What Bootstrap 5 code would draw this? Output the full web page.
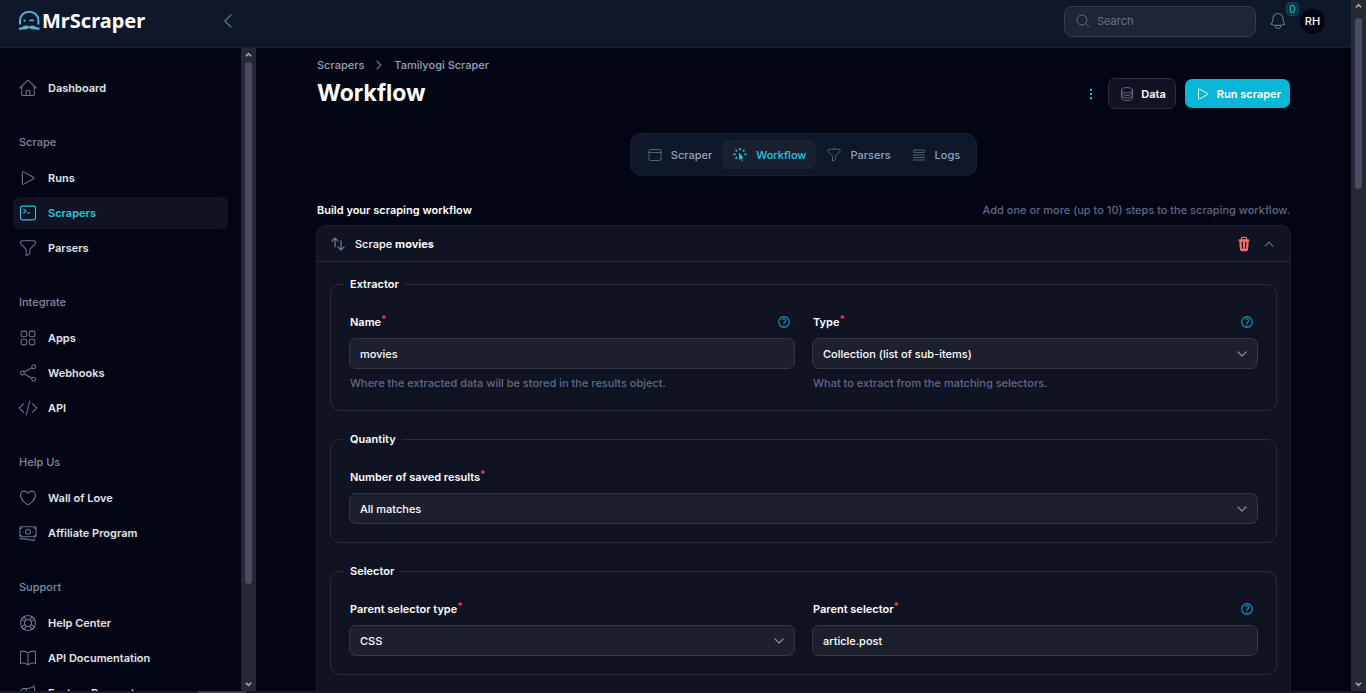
<!DOCTYPE html>
<html lang="en">
<head>
<meta charset="utf-8">
<meta name="viewport" content="width=device-width, initial-scale=1">
<title>Workflow - MrScraper</title>
<link href="https://cdn.jsdelivr.net/npm/bootstrap@5.3.0/dist/css/bootstrap.min.css" rel="stylesheet">
<style>
  :root { --page:#020513; --panel:#0f172a; --step:#101322; --field:#1c1f2c; --line:#272a37; --muted:#94a3b8; --dim:#5b6b84; --cyan:#22c9e0; }
  body { background:var(--page); color:#fff; font:500 11px/18px Inter, "Liberation Sans", sans-serif; }
  a { text-decoration:none; color:inherit; }
  .min-0 { min-width:0; min-height:0; }
  .ico { width:20px; height:20px; fill:none; stroke:currentColor; stroke-width:1.3; stroke-linecap:round; stroke-linejoin:round; flex:none; }
  .ico-sm { width:16px; height:16px; }
  .ico-xs { width:12px; height:12px; stroke-width:2.4; }
  .solid { fill:currentColor; stroke:none; }
  .bold { stroke-width:2; }
  .slate { color:#64748b; }

  .topbar { height:48px; background:var(--panel); border-bottom:1px solid #172133; padding:0 26px 5px 18px; }
  .brand { font:700 20px/26px "Noto Sans", "Open Sans", sans-serif; width:200px; gap:2px; }
  .brand svg { width:22px; height:22px; }
  .search { width:192px; height:31px; background:#1e2536; border:1px solid #353c4b; border-radius:8px; padding:0 10px; gap:6px; }
  .search input { background:none; border:0; outline:0; color:#fff; width:100%; font-size:11px; padding:0; }
  .search input::placeholder { color:#64748b; opacity:1; }
  .alerts { margin:0 12px; }
  .avatar-dot { width:25px; height:25px; background:var(--page); font-size:11px; font-weight:500; }
  .count { top:-9px; left:18px; min-width:13px; height:14px; line-height:12px; font-size:10px; color:var(--cyan); background:#0b3444; border:1px solid #10485a; border-radius:4px; text-align:center; }

  .side { width:241px; padding:24px 13px 0; }
  .side ul { gap:3px; }
  .side h2 { font-size:11px; font-weight:500; line-height:18px; color:#7e8ca2; margin:29px 0 11px 6px; }
  .side a { height:32px; gap:10px; padding:0 5px; border-radius:6px; color:#e2e5ea; font-weight:600; }
  .side a.on { background:#101322; color:var(--cyan); }

  .track { width:15px; background:#262933; flex:none; padding:3px 4px; color:#a5a5a8; }
  .track svg { width:7px; height:7px; fill:none; stroke:currentColor; stroke-width:2; flex:none; }
  .thumb { width:7px; border-radius:4px; background:#484b62; }
  .status { height:2px; background:#1b191c; flex:none; padding-left:198px; }
  .status div { width:48px; height:2px; background:#3c3a3d; }

  main { padding:8px 61px 0; }
  .crumbs { color:var(--muted); gap:9px; margin-bottom:4px; }
  h1 { font-size:23px; font-weight:700; line-height:31px; margin:0; }
  .actions { gap:9px; }
  .tool { font-size:11px; line-height:18px; font-weight:600; color:#fff; border-radius:7px; gap:6px; padding:0 9px 0 10px; height:29px; border:0; }
  .tool.ghost { background:#101322; border:1px solid #2b2e3a; height:31px; }
  .tool.go { background:#08b6d8; }
  .dots { color:var(--cyan); background:none; border:0; padding:0; }
  .tabs { margin:24px 0 25px; }
  .tabs > div { background:var(--panel); border:1px solid #161e2f; border-radius:11px; padding:6px; }
  .tabs a { height:29px; padding:0 10px; gap:8px; border-radius:7px; color:var(--muted); }
  .tabs a svg { color:#5d6c84; }
  .tabs a.on, .tabs a.on svg { color:var(--cyan); }
  .tabs a.on { background:#1b2030; }
  .intro { margin-bottom:6px; }
  .intro h2 { font-size:11px; font-weight:600; line-height:18px; margin:0; }
  .note { color:var(--dim); }

  .step { background:var(--step); border:1px solid #1b1e2b; border-radius:10px; margin:0 -1px; }
  .step-head { height:36px; border-bottom:1px solid var(--line); padding:0 15px 0 13px; gap:9px; }
  .step-head button { background:none; border:0; padding:0; line-height:0; }
  .step-tools { gap:11px; }
  .trash { color:#f87171; }
  .step-body { padding:13px 13px 48px; gap:19px; }
  fieldset { border:1px solid var(--line); border-radius:10px; padding:0 13px 18px; }
  legend { float:none; width:auto; font-size:11px; font-weight:600; line-height:18px; padding:0 6px; margin:0 0 20px; }
  .pair { display:grid; grid-template-columns:1fr 1fr; gap:17px; padding:0 5px; }
  .pair .wide { grid-column:1 / -1; }
  .pair label { font-weight:600; }
  .pair label sup { color:#e5484d; font-size:10px; top:-3px; }
  .label-row { height:18px; margin-bottom:7px; padding:0 4px 0 1px; }
  .box, .box:focus { height:31px; font-size:11px; line-height:18px; font-weight:500; color:#fff; background-color:var(--field); border:1px solid #353844; border-radius:7px; padding:0 10px; box-shadow:none; }
  select.box { background-image:url("data:image/svg+xml,%3Csvg xmlns='http://www.w3.org/2000/svg' viewBox='0 0 12 12' fill='none' stroke='%23848894' stroke-width='1.3' stroke-linecap='round' stroke-linejoin='round'%3E%3Cpath d='M2 4l4 4 4-4'/%3E%3C/svg%3E"); background-size:12px 12px; background-position:right 9px center; }
  .hint { margin-top:5px; padding-left:1px; }
  .help { color:#128fa8; stroke-width:2.2; width:14px; height:14px; }
</style>
</head>
<body class="vh-100 overflow-hidden d-flex flex-column">
<svg class="d-none" xmlns="http://www.w3.org/2000/svg">
  <symbol id="home" viewBox="0 0 24 24"><path d="m2.25 12 8.954-8.955c.44-.439 1.152-.439 1.591 0L21.75 12M4.5 9.75v10.125c0 .621.504 1.125 1.125 1.125H9.75v-4.875c0-.621.504-1.125 1.125-1.125h2.25c.621 0 1.125.504 1.125 1.125V21h4.125c.621 0 1.125-.504 1.125-1.125V9.75M8.25 21h8.25"/></symbol>
  <symbol id="play" viewBox="0 0 24 24"><path d="M5.25 5.653c0-.856.917-1.398 1.667-.986l11.54 6.347a1.125 1.125 0 0 1 0 1.972l-11.54 6.347a1.125 1.125 0 0 1-1.667-.986V5.653Z"/></symbol>
  <symbol id="term" viewBox="0 0 24 24"><path d="m6.75 7.5 3 2.25-3 2.25m4.5 0h3m-9 8.25h13.5A2.25 2.25 0 0 0 21 18V6a2.25 2.25 0 0 0-2.25-2.25H5.25A2.25 2.25 0 0 0 3 6v12a2.25 2.25 0 0 0 2.25 2.25Z"/></symbol>
  <symbol id="funnel" viewBox="0 0 24 24"><path d="M12 3c2.755 0 5.455.232 8.083.678.533.09.917.556.917 1.096v1.044a2.25 2.25 0 0 1-.659 1.591l-5.432 5.432a2.25 2.25 0 0 0-.659 1.591v2.927a2.25 2.25 0 0 1-1.244 2.013L9.75 21v-6.568a2.25 2.25 0 0 0-.659-1.591L3.659 7.409A2.25 2.25 0 0 1 3 5.818V4.774c0-.54.384-1.006.917-1.096A48.32 48.32 0 0 1 12 3Z"/></symbol>
  <symbol id="grid" viewBox="0 0 24 24"><path d="M3.75 6A2.25 2.25 0 0 1 6 3.75h2.25A2.25 2.25 0 0 1 10.5 6v2.25a2.25 2.25 0 0 1-2.25 2.25H6a2.25 2.25 0 0 1-2.25-2.25V6ZM3.75 15.75A2.25 2.25 0 0 1 6 13.5h2.25a2.25 2.25 0 0 1 2.25 2.25V18a2.25 2.25 0 0 1-2.25 2.25H6A2.25 2.25 0 0 1 3.75 18v-2.25ZM13.5 6a2.25 2.25 0 0 1 2.25-2.25H18A2.25 2.25 0 0 1 20.25 6v2.25A2.25 2.25 0 0 1 18 10.5h-2.25a2.25 2.25 0 0 1-2.25-2.25V6ZM13.5 15.75a2.25 2.25 0 0 1 2.25-2.25H18a2.25 2.25 0 0 1 2.25 2.25V18A2.25 2.25 0 0 1 18 20.25h-2.25A2.25 2.25 0 0 1 13.5 18v-2.25Z"/></symbol>
  <symbol id="share" viewBox="0 0 24 24"><path d="M7.217 10.907a2.25 2.25 0 1 0 0 2.186m0-2.186c.18.324.283.696.283 1.093s-.103.77-.283 1.093m0-2.186 9.566-5.314m-9.566 7.5 9.566 5.314m0 0a2.25 2.25 0 1 0 3.935 2.186 2.25 2.25 0 0 0-3.935-2.186Zm0-12.814a2.25 2.25 0 1 0 3.933-2.185 2.25 2.25 0 0 0-3.933 2.185Z"/></symbol>
  <symbol id="code" viewBox="0 0 24 24"><path d="M17.25 6.75 22.5 12l-5.25 5.25m-10.5 0L1.5 12l5.25-5.25m7.5-3-4.5 16.5"/></symbol>
  <symbol id="heart" viewBox="0 0 24 24"><path d="M21 8.25c0-2.485-2.099-4.5-4.688-4.5-1.935 0-3.597 1.126-4.312 2.733-.715-1.607-2.377-2.733-4.313-2.733C5.1 3.75 3 5.765 3 8.25c0 7.22 9 12 9 12s9-4.78 9-12Z"/></symbol>
  <symbol id="cash" viewBox="0 0 24 24"><path d="M2.25 18.75a60.07 60.07 0 0 1 15.797 2.101c.727.198 1.453-.342 1.453-1.096V18.75M3.375 4.5h17.25c.621 0 1.125.504 1.125 1.125v9.75c0 .621-.504 1.125-1.125 1.125H3.375A1.125 1.125 0 0 1 2.25 15.375v-9.75c0-.621.504-1.125 1.125-1.125ZM2.25 6.75h1.5A.75.75 0 0 0 4.5 6v-1.5M19.5 4.5V6c0 .414.336.75.75.75h1.5M2.25 15h1.5a.75.75 0 0 1 .75.75v.75M19.5 16.5v-.75a.75.75 0 0 1 .75-.75h1.5M15 10.5a3 3 0 1 1-6 0 3 3 0 0 1 6 0ZM18 10.5h.008v.008H18V10.5ZM6 10.5h.008v.008H6V10.5Z"/></symbol>
  <symbol id="buoy" viewBox="0 0 24 24"><circle cx="12" cy="12" r="9"/><circle cx="12" cy="12" r="4.3"/><path d="m16.7 4.3-2.6 4m2.600-4 3 3m0 0-4 2.700m4 6.800-4-2.800m4 2.800-3 3m0 0-2.600-4m-6.800 4 2.600-4m-2.600 4-3-3m0 0 4-2.800M4.300 7.300l4 2.700m-4-2.700 3-3m0 0 2.600 4"/></symbol>
  <symbol id="book" viewBox="0 0 24 24"><path d="M12 6.042A8.967 8.967 0 0 0 6 3.75c-1.052 0-2.062.18-3 .512v14.25A8.987 8.987 0 0 1 6 18c2.305 0 4.408.867 6 2.292m0-14.25a8.966 8.966 0 0 1 6-2.292c1.052 0 2.062.18 3 .512v14.25A8.987 8.987 0 0 0 18 18a8.967 8.967 0 0 0-6 2.292m0-14.25v14.25"/></symbol>
  <symbol id="horn" viewBox="0 0 24 24"><path d="M10.34 15.84c-.688-.06-1.386-.09-2.09-.09H7.5a4.5 4.5 0 1 1 0-9h.75c.704 0 1.402-.03 2.09-.09m0 9.18c.253.962.584 1.892.985 2.783.247.55.06 1.21-.463 1.511l-.657.38c-.551.318-1.26.117-1.527-.461a20.845 20.845 0 0 1-1.44-4.282m3.102.069a18.03 18.03 0 0 1-.59-4.59c0-1.586.205-3.124.59-4.59m0 9.18a23.848 23.848 0 0 1 8.835 2.535M10.34 6.66a23.847 23.847 0 0 0 8.835-2.535m0 0A23.74 23.74 0 0 0 18.795 3m.38 1.125a23.91 23.91 0 0 1 1.014 5.395m-1.014 8.855c-.118.38-.245.754-.38 1.125m.38-1.125a23.91 23.91 0 0 0 1.014-5.395m0-3.46c.495.413.811 1.035.811 1.73 0 .695-.316 1.317-.811 1.73m0-3.46a24.347 24.347 0 0 1 0 3.46"/></symbol>
  <symbol id="mag" viewBox="0 0 24 24"><path d="m21 21-5.197-5.197m0 0A7.5 7.5 0 1 0 5.196 5.196a7.5 7.5 0 0 0 10.607 10.607Z"/></symbol>
  <symbol id="bell" viewBox="0 0 24 24"><path d="M14.857 17.082a23.848 23.848 0 0 0 5.454-1.31A8.967 8.967 0 0 1 18 9.75V9A6 6 0 0 0 6 9v.75a8.967 8.967 0 0 1-2.312 6.022c1.733.64 3.56 1.085 5.455 1.31m5.714 0a24.255 24.255 0 0 1-5.714 0m5.714 0a3 3 0 1 1-5.714 0"/></symbol>
  <symbol id="left" viewBox="0 0 24 24"><path d="M15.75 19.5 8.25 12l7.5-7.5"/></symbol>
  <symbol id="right" viewBox="0 0 24 24"><path d="m8.25 4.5 7.5 7.5-7.5 7.5"/></symbol>
  <symbol id="up" viewBox="0 0 24 24"><path d="m4.5 15.75 7.5-7.5 7.5 7.5"/></symbol>
  <symbol id="more" viewBox="0 0 24 24"><path d="M10.5 4h3v3h-3zM10.5 10.5h3v3h-3zM10.5 17h3v3h-3z"/></symbol>
  <symbol id="db" viewBox="0 0 24 24"><path d="M20.25 6.375c0 2.278-3.694 4.125-8.25 4.125S3.75 8.653 3.75 6.375m16.5 0c0-2.278-3.694-4.125-8.25-4.125S3.75 4.097 3.75 6.375m16.5 0v11.25c0 2.278-3.694 4.125-8.25 4.125s-8.25-1.847-8.25-4.125V6.375m16.5 0v3.75m-16.5-3.75v3.75m16.5 0v3.75C20.25 16.153 16.556 18 12 18s-8.25-1.847-8.25-4.125v-3.75m16.5 0c0 2.278-3.694 4.125-8.25 4.125s-8.25-1.847-8.25-4.125"/></symbol>
  <symbol id="window" viewBox="0 0 24 24"><path d="M3 8.25V18a2.25 2.25 0 0 0 2.25 2.25h13.5A2.25 2.25 0 0 0 21 18V8.25m-18 0V6a2.25 2.25 0 0 1 2.25-2.25h13.5A2.25 2.25 0 0 1 21 6v2.25m-18 0h18"/></symbol>
  <symbol id="cursor" viewBox="0 0 24 24"><path d="M11.5 10v8.5l2.300-2 1.700 4.500"/><path d="M11.500 9.500 17 16.500h-3.500l-2 2Z" fill="currentColor" stroke-width=".5"/><path d="M12 2.500v1.500m6 1-1 1M21 11h-1.500M7 16l-1 1M4.500 11H3m4-5L6 5" stroke-width="2.400"/></symbol>
  <symbol id="rows" viewBox="0 0 24 24"><path d="M3.75 12h16.5m-16.5 3.75h16.5M3.75 19.5h16.5M5.625 4.5h12.75a1.875 1.875 0 0 1 0 3.75H5.625a1.875 1.875 0 0 1 0-3.75Z"/></symbol>
  <symbol id="sort" viewBox="0 0 24 24"><path d="M3 7.5 7.5 3m0 0L12 7.5M7.5 3v13.5m13.5 0L16.5 21m0 0L12 16.5m4.500 4.500V7.500"/></symbol>
  <symbol id="trash" viewBox="0 0 20 20"><path fill-rule="evenodd" d="M8.75 1A2.75 2.75 0 0 0 6 3.75v.443c-.795.077-1.584.176-2.365.298a.75.75 0 1 0 .23 1.482l.149-.022.841 10.518A2.75 2.75 0 0 0 7.596 19h4.807a2.75 2.75 0 0 0 2.742-2.53l.841-10.52.149.023a.75.75 0 0 0 .23-1.482A41.03 41.03 0 0 0 14 4.193V3.75A2.75 2.75 0 0 0 11.25 1h-2.5ZM10 4c.84 0 1.673.025 2.5.075V3.75c0-.69-.56-1.25-1.25-1.25h-2.5c-.69 0-1.25.56-1.25 1.25v.325C8.327 4.025 9.16 4 10 4ZM8.58 7.72a.75.75 0 0 0-1.5.06l.3 7.5a.75.75 0 1 0 1.5-.06l-.3-7.5Zm4.34.06a.75.75 0 1 0-1.5-.06l-.3 7.5a.75.75 0 1 0 1.5.06l.3-7.5Z"/></symbol>
  <symbol id="ask" viewBox="0 0 24 24"><path d="M9.879 7.519c1.171-1.025 3.071-1.025 4.242 0 1.172 1.025 1.172 2.687 0 3.712-.203.179-.43.326-.67.442-.745.361-1.45.999-1.45 1.827v.75M21 12a9 9 0 1 1-18 0 9 9 0 0 1 18 0Zm-9 5.25h.008v.008H12v-.008Z"/></symbol>
</svg>

<div class="d-flex flex-grow-1 min-0">
  <div class="d-flex flex-column flex-grow-1 min-0">
    <header class="topbar d-flex align-items-center flex-shrink-0">
      <a href="#" class="brand d-flex align-items-center">
        <svg viewBox="0 0 22 22" fill="none" stroke="#4fb3d4" stroke-width="2" stroke-linecap="butt"><path d="M2 14.500V10.500a9.200 8.800 0 0 1 18.400 0v4"/><circle cx="6.500" cy="10.600" r="1.100" fill="#4fb3d4" stroke="none"/><path d="M11.500 11q2-1.600 4.500-.2" stroke-width="1.600"/><path d="M1 17.500q2.500.2 4.500-1.200 2.500-1.800 5.700.2 3.200-2 5.700-.2 2 1.400 4.500 1.200v2.500q-2.500-.8-4.500-.5-3 .4-5.700-1.500-2.700 1.900-5.700 1.500-2-.3-4.500.5Z" fill="#4fb3d4" stroke="none"/></svg>
        <span>MrScraper</span>
      </a>
      <button class="btn p-0 border-0 lh-1 slate" aria-label="Collapse sidebar"><svg class="ico"><use href="#left"/></svg></button>
      <label class="search d-flex align-items-center ms-auto slate">
        <svg class="ico ico-sm"><use href="#mag"/></svg>
        <input type="search" placeholder="Search" aria-label="Search">
      </label>
      <button class="alerts btn p-0 border-0 lh-1 slate position-relative" aria-label="Notifications"><svg class="ico"><use href="#bell"/></svg><span class="count position-absolute">0</span></button>
      <button class="btn p-0 border-0 avatar-dot rounded-circle text-white" aria-label="Account">RH</button>
    </header>

    <div class="d-flex flex-grow-1 min-0">
      <nav class="side flex-shrink-0 overflow-hidden" aria-label="Main">
        <a href="#" class="d-flex align-items-center"><svg class="ico slate"><use href="#home"/></svg>Dashboard</a>
        <h2>Scrape</h2>
        <ul class="list-unstyled d-flex flex-column m-0">
          <li><a href="#" class="d-flex align-items-center"><svg class="ico slate"><use href="#play"/></svg>Runs</a></li>
          <li><a href="#" class="d-flex align-items-center on"><svg class="ico"><use href="#term"/></svg>Scrapers</a></li>
          <li><a href="#" class="d-flex align-items-center"><svg class="ico slate"><use href="#funnel"/></svg>Parsers</a></li>
        </ul>
        <h2>Integrate</h2>
        <ul class="list-unstyled d-flex flex-column m-0">
          <li><a href="#" class="d-flex align-items-center"><svg class="ico slate"><use href="#grid"/></svg>Apps</a></li>
          <li><a href="#" class="d-flex align-items-center"><svg class="ico slate"><use href="#share"/></svg>Webhooks</a></li>
          <li><a href="#" class="d-flex align-items-center"><svg class="ico slate"><use href="#code"/></svg>API</a></li>
        </ul>
        <h2>Help Us</h2>
        <ul class="list-unstyled d-flex flex-column m-0">
          <li><a href="#" class="d-flex align-items-center"><svg class="ico slate"><use href="#heart"/></svg>Wall of Love</a></li>
          <li><a href="#" class="d-flex align-items-center"><svg class="ico slate"><use href="#cash"/></svg>Affiliate Program</a></li>
        </ul>
        <h2>Support</h2>
        <ul class="list-unstyled d-flex flex-column m-0">
          <li><a href="#" class="d-flex align-items-center"><svg class="ico slate"><use href="#buoy"/></svg>Help Center</a></li>
          <li><a href="#" class="d-flex align-items-center"><svg class="ico slate"><use href="#book"/></svg>API Documentation</a></li>
          <li><a href="#" class="d-flex align-items-center"><svg class="ico slate"><use href="#horn"/></svg>Feature Request</a></li>
        </ul>
      </nav>
      <div class="track d-flex flex-column gap-1" aria-hidden="true">
        <svg viewBox="0 0 8 8"><path d="M1 6l3-3 3 3"/></svg>
        <div class="thumb" style="height:82%"></div>
        <svg class="mt-auto" viewBox="0 0 8 8"><path d="M1 2l3 3 3-3"/></svg>
      </div>

      <main class="flex-grow-1 min-0 overflow-hidden">
        <nav class="crumbs d-flex align-items-center" aria-label="Breadcrumb">
          <a href="#">Scrapers</a><svg class="ico ico-xs slate"><use href="#right"/></svg><a href="#">Tamilyogi Scraper</a>
        </nav>
        <div class="d-flex justify-content-between align-items-center">
          <h1>Workflow</h1>
          <div class="actions d-flex align-items-center">
            <button class="dots d-flex" aria-label="More actions"><svg class="ico ico-sm solid"><use href="#more"/></svg></button>
            <button class="tool ghost d-flex align-items-center"><svg class="ico ico-sm slate"><use href="#db"/></svg>Data</button>
            <button class="tool go d-flex align-items-center"><svg class="ico ico-sm"><use href="#play"/></svg>Run scraper</button>
          </div>
        </div>
        <nav class="tabs d-flex justify-content-center" aria-label="Scraper sections">
          <div class="d-flex">
            <a href="#" class="d-flex align-items-center"><svg class="ico ico-sm"><use href="#window"/></svg>Scraper</a>
            <a href="#" class="d-flex align-items-center on" aria-current="page"><svg class="ico ico-sm"><use href="#cursor"/></svg>Workflow</a>
            <a href="#" class="d-flex align-items-center"><svg class="ico ico-sm"><use href="#funnel"/></svg>Parsers</a>
            <a href="#" class="d-flex align-items-center"><svg class="ico ico-sm"><use href="#rows"/></svg>Logs</a>
          </div>
        </nav>
        <div class="intro d-flex justify-content-between">
          <h2>Build your scraping workflow</h2>
          <span class="note">Add one or more (up to 10) steps to the scraping workflow.</span>
        </div>

        <section class="step">
          <div class="step-head d-flex align-items-center">
            <button class="slate" aria-label="Reorder step"><svg class="ico ico-sm bold"><use href="#sort"/></svg></button>
            <span>Scrape <b>movies</b></span>
            <div class="step-tools d-flex align-items-center ms-auto">
              <button class="trash" aria-label="Delete step"><svg class="ico ico-sm solid"><use href="#trash"/></svg></button>
              <button class="slate" aria-label="Collapse step"><svg class="ico ico-xs"><use href="#up"/></svg></button>
            </div>
          </div>
          <form class="step-body d-flex flex-column">
            <fieldset>
              <legend>Extractor</legend>
              <div class="pair">
                <div>
                  <div class="label-row d-flex justify-content-between align-items-center"><label for="name">Name<sup>*</sup></label><svg class="ico help"><use href="#ask"/></svg></div>
                  <input id="name" class="form-control box" value="movies">
                  <div class="note hint">Where the extracted data will be stored in the results object.</div>
                </div>
                <div>
                  <div class="label-row d-flex justify-content-between align-items-center"><label for="type">Type<sup>*</sup></label><svg class="ico help"><use href="#ask"/></svg></div>
                  <select id="type" class="form-select box"><option>Collection (list of sub-items)</option></select>
                  <div class="note hint">What to extract from the matching selectors.</div>
                </div>
              </div>
            </fieldset>
            <fieldset>
              <legend>Quantity</legend>
              <div class="pair">
                <div class="wide">
                  <div class="label-row"><label for="qty">Number of saved results<sup>*</sup></label></div>
                  <select id="qty" class="form-select box"><option>All matches</option></select>
                </div>
              </div>
            </fieldset>
            <fieldset>
              <legend>Selector</legend>
              <div class="pair">
                <div>
                  <div class="label-row"><label for="ptype">Parent selector type<sup>*</sup></label></div>
                  <select id="ptype" class="form-select box"><option>CSS</option></select>
                </div>
                <div>
                  <div class="label-row d-flex justify-content-between align-items-center"><label for="psel">Parent selector<sup>*</sup></label><svg class="ico help"><use href="#ask"/></svg></div>
                  <input id="psel" class="form-control box" value="article.post">
                </div>
              </div>
            </fieldset>
          </form>
        </section>
      </main>
    </div>
  </div>
  <div class="track d-flex flex-column gap-2" aria-hidden="true">
    <svg viewBox="0 0 8 8"><path d="M1 5l3-3 3 3"/></svg>
    <div class="thumb" style="height:25%"></div>
    <svg class="mt-auto" viewBox="0 0 8 8"><path d="M1 2l3 3 3-3"/></svg>
  </div>
</div>
<div class="status"><div></div></div>
<script src="https://cdn.jsdelivr.net/npm/bootstrap@5.3.0/dist/js/bootstrap.bundle.min.js"></script>
</body>
</html>
